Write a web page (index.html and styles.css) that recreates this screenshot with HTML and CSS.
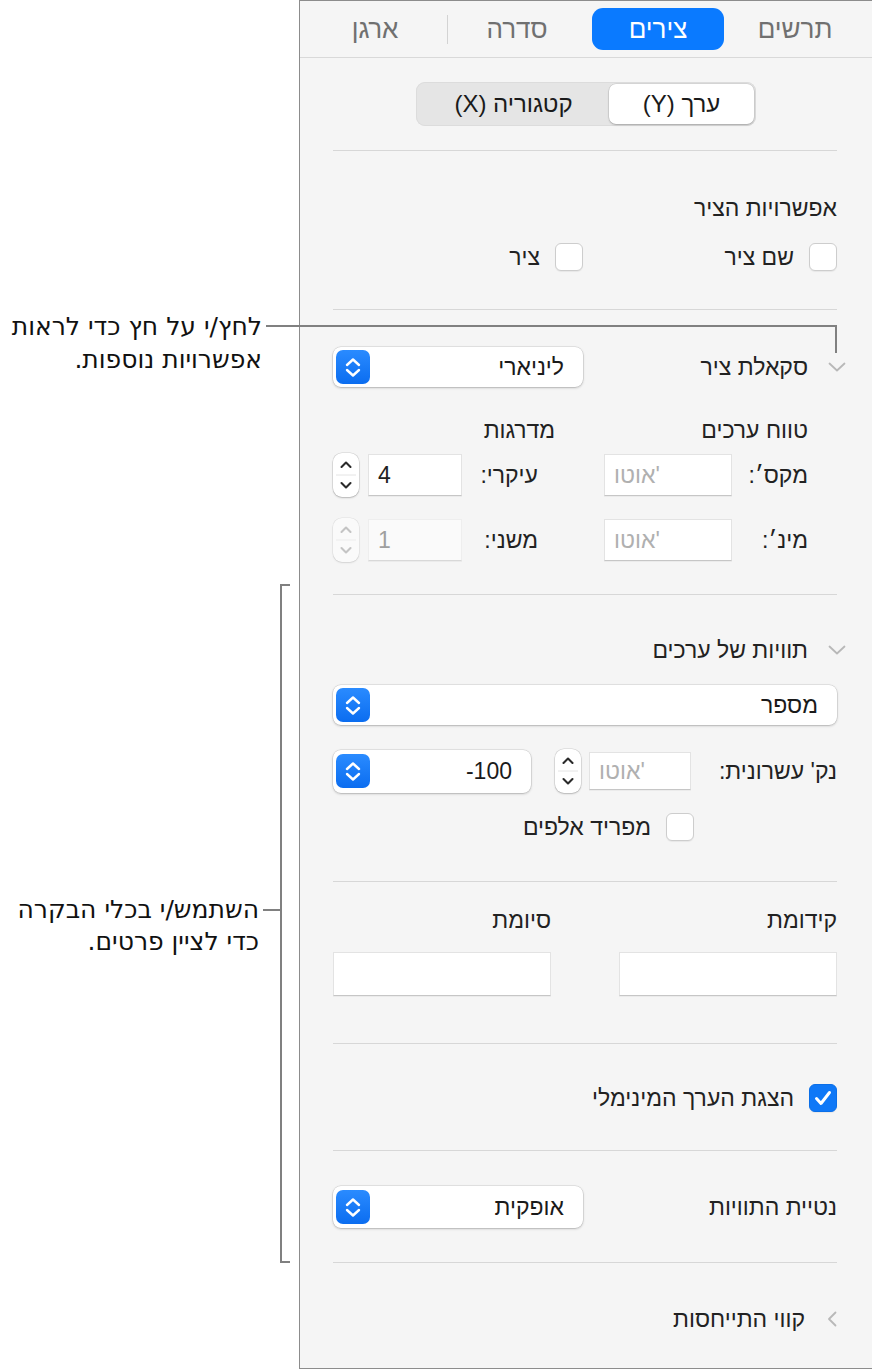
FILE: index.html
```html
<!DOCTYPE html>
<html lang="he">
<head>
<meta charset="utf-8">
<title>Axis inspector</title>
<link rel="stylesheet" href="styles.css">
</head>
<body>
<div class="page">
  <div class="notes" dir="rtl">
    <p class="note note-1">לחץ/י על חץ כדי לראות<br>אפשרויות נוספות.</p>
    <span class="cline l1-h"></span>
    <span class="cline l1-v"></span>
    <p class="note note-2">השתמש/י בכלי הבקרה<br>כדי לציין פרטים.</p>
    <span class="cline l2-tick"></span>
    <span class="bracket"></span>
  </div>

  <div class="panel" dir="rtl">
    <nav class="tabs">
      <span class="tab t1">תרשים</span>
      <span class="tab t2 active">צירים</span>
      <span class="tab t3">סדרה</span>
      <span class="tab-sep"></span>
      <span class="tab t4">ארגן</span>
    </nav>

    <div class="seg-wrap">
      <div class="seg">
        <span class="seg-item on">ערך (Y)</span>
        <span class="seg-item">קטגוריה (X)</span>
      </div>
    </div>

    <div class="content">
      <hr class="div">

      <section class="sec sec-a">
        <div class="title">אפשרויות הציר</div>
        <div class="two-col checks">
          <label class="check"><span class="box"></span><span>שם ציר</span></label>
          <label class="check"><span class="box"></span><span>ציר</span></label>
        </div>
      </section>

      <hr class="div">

      <section class="sec sec-b">
        <div class="row-hdr h40">
          <div class="hdr">
            <svg class="chev-down" width="18" height="10" viewBox="0 0 18 10"><polyline points="1.5,1.5 9,8.5 16.5,1.5" fill="none" stroke="#b8b8b8" stroke-width="1.8" stroke-linecap="round" stroke-linejoin="round"/></svg>
            <span class="hdr-text">סקאלת ציר</span>
          </div>
          <div class="popup w250">
            <span class="popup-val">ליניארי</span>
            <span class="popup-ic"><svg width="34" height="34" viewBox="0 0 34 34"><polyline points="11,15 17,9.5 23,15" fill="none" stroke="#fff" stroke-width="2.4" stroke-linecap="round" stroke-linejoin="round"/><polyline points="11,20 17,25.5 23,20" fill="none" stroke="#fff" stroke-width="2.4" stroke-linecap="round" stroke-linejoin="round"/></svg></span>
          </div>
        </div>

        <div class="range-grid">
          <div class="g-head gh1">טווח ערכים</div>
          <div class="g-head gh2">מדרגות</div>

          <div class="g-label gl1 r1">מקס׳:</div>
          <div class="field r1" dir="ltr"><span class="ph">אוטו'</span></div>
          <div class="g-label gl2 r1">עיקרי:</div>
          <div class="field r1" dir="ltr">4</div>
          <div class="g-gap r1"></div>
          <div class="stepper r1">
            <svg width="26" height="44" viewBox="0 0 26 44"><line x1="3" y1="22" x2="23" y2="22" stroke="#e4e4e4" stroke-width="1"/><polyline points="8.5,14 13,9.5 17.5,14" fill="none" stroke="#2a2a2a" stroke-width="2.1" stroke-linecap="round" stroke-linejoin="round"/><polyline points="8.5,30 13,34.5 17.5,30" fill="none" stroke="#2a2a2a" stroke-width="2.1" stroke-linecap="round" stroke-linejoin="round"/></svg>
          </div>

          <div class="g-label gl1 r2">מינ׳:</div>
          <div class="field r2" dir="ltr"><span class="ph">אוטו'</span></div>
          <div class="g-label gl2 r2">משני:</div>
          <div class="field disabled r2" dir="ltr">1</div>
          <div class="g-gap r2"></div>
          <div class="stepper disabled r2">
            <svg width="26" height="44" viewBox="0 0 26 44"><line x1="3" y1="22" x2="23" y2="22" stroke="#ececec" stroke-width="1"/><polyline points="8.5,14 13,9.5 17.5,14" fill="none" stroke="#c4c4c4" stroke-width="2.1" stroke-linecap="round" stroke-linejoin="round"/><polyline points="8.5,30 13,34.5 17.5,30" fill="none" stroke="#c4c4c4" stroke-width="2.1" stroke-linecap="round" stroke-linejoin="round"/></svg>
          </div>
        </div>
      </section>

      <hr class="div">

      <section class="sec sec-c">
        <div class="row-hdr h22">
          <div class="hdr">
            <svg class="chev-down" width="18" height="10" viewBox="0 0 18 10"><polyline points="1.5,1.5 9,8.5 16.5,1.5" fill="none" stroke="#b8b8b8" stroke-width="1.8" stroke-linecap="round" stroke-linejoin="round"/></svg>
            <span class="hdr-text">תוויות של ערכים</span>
          </div>
        </div>

        <div class="popup wfull">
          <span class="popup-val">מספר</span>
          <span class="popup-ic"><svg width="34" height="34" viewBox="0 0 34 34"><polyline points="11,15 17,9.5 23,15" fill="none" stroke="#fff" stroke-width="2.4" stroke-linecap="round" stroke-linejoin="round"/><polyline points="11,20 17,25.5 23,20" fill="none" stroke="#fff" stroke-width="2.4" stroke-linecap="round" stroke-linejoin="round"/></svg></span>
        </div>

        <div class="dec-grid">
          <div class="dec-label">נק' עשרונית:</div>
          <div class="field f38" dir="ltr"><span class="ph">אוטו'</span></div>
          <div></div>
          <div class="stepper">
            <svg width="26" height="44" viewBox="0 0 26 44"><line x1="3" y1="22" x2="23" y2="22" stroke="#e4e4e4" stroke-width="1"/><polyline points="8.5,14 13,9.5 17.5,14" fill="none" stroke="#2a2a2a" stroke-width="2.1" stroke-linecap="round" stroke-linejoin="round"/><polyline points="8.5,30 13,34.5 17.5,30" fill="none" stroke="#2a2a2a" stroke-width="2.1" stroke-linecap="round" stroke-linejoin="round"/></svg>
          </div>
          <div></div>
          <div class="popup h43">
            <span class="popup-val"><span dir="ltr">-100</span></span>
            <span class="popup-ic"><svg width="34" height="34" viewBox="0 0 34 34"><polyline points="11,15 17,9.5 23,15" fill="none" stroke="#fff" stroke-width="2.4" stroke-linecap="round" stroke-linejoin="round"/><polyline points="11,20 17,25.5 23,20" fill="none" stroke="#fff" stroke-width="2.4" stroke-linecap="round" stroke-linejoin="round"/></svg></span>
          </div>
        </div>

        <div class="thousands">
          <label class="check"><span class="box"></span><span>מפריד אלפים</span></label>
        </div>
      </section>

      <hr class="div">

      <section class="sec sec-d">
        <div class="fix-grid">
          <div class="title">קידומת</div>
          <div class="title">סיומת</div>
          <div class="field tall"></div>
          <div class="field tall"></div>
        </div>
      </section>

      <hr class="div">

      <section class="sec sec-e">
        <label class="check"><span class="box checked"><svg width="28" height="28" viewBox="0 0 28 28"><polyline points="7.5,14.5 12,19.5 20.5,8.5" fill="none" stroke="#fff" stroke-width="3" stroke-linecap="round" stroke-linejoin="round"/></svg></span><span>הצגת הערך המינימלי</span></label>
      </section>

      <hr class="div">

      <section class="sec sec-f">
        <div class="row-hdr h42">
          <span class="plain">נטיית התוויות</span>
          <div class="popup w250 h42">
            <span class="popup-val">אופקית</span>
            <span class="popup-ic"><svg width="34" height="34" viewBox="0 0 34 34"><polyline points="11,15 17,9.5 23,15" fill="none" stroke="#fff" stroke-width="2.4" stroke-linecap="round" stroke-linejoin="round"/><polyline points="11,20 17,25.5 23,20" fill="none" stroke="#fff" stroke-width="2.4" stroke-linecap="round" stroke-linejoin="round"/></svg></span>
          </div>
        </div>
      </section>

      <hr class="div">

      <section class="sec sec-g">
        <div class="row-hdr h22">
          <div class="hdr">
            <svg class="chev-left" width="12" height="16" viewBox="0 0 12 16"><polyline points="9.5,1.5 3,8 9.5,14.5" fill="none" stroke="#b8b8b8" stroke-width="1.8" stroke-linecap="round" stroke-linejoin="round"/></svg>
            <span class="hdr-text g-text">קווי התייחסות</span>
          </div>
        </div>
      </section>
    </div>
  </div>
</div>
</body>
</html>
```

FILE: styles.css
```css
* { box-sizing: border-box; }

html, body {
  margin: 0;
  padding: 0;
  background: #ffffff;
}

body {
  font-family: "Liberation Sans", "DejaVu Sans", sans-serif;
  color: #222;
}

.page {
  position: relative;
  width: 872px;
  height: 1370px;
  overflow: hidden;
}

/* ---------- callouts ---------- */
.notes {
  position: absolute;
  inset: 0;
  z-index: 2;
  pointer-events: none;
}

.note {
  position: absolute;
  margin: 0;
  font-family: "DejaVu Sans", "Liberation Sans", sans-serif;
  font-size: 25px;
  color: #111;
  text-align: right;
  white-space: nowrap;
}

.note-1 {
  right: 610px;
  top: 310px;
  line-height: 33px;
}

.note-2 {
  right: 613px;
  top: 894px;
  line-height: 32px;
}

.cline {
  position: absolute;
  background: #808080;
}

.l1-h { left: 266px; top: 325px; width: 571px; height: 2px; }
.l1-v { left: 835px; top: 325px; width: 2px; height: 28px; }
.l2-tick { left: 263px; top: 909px; width: 18px; height: 2px; }

.bracket {
  position: absolute;
  left: 280px;
  top: 584px;
  width: 10px;
  height: 679px;
  border: 2px solid #808080;
  border-right: none;
}

/* ---------- panel ---------- */
.panel {
  margin-left: 299px;
  width: 573px;
  height: 1369px;
  background: #f5f5f5;
  border-left: 1px solid #8c8c8c;
  border-top: 1px solid #8c8c8c;
  border-bottom: 1px solid #8c8c8c;
  overflow: hidden;
  font-size: 23px;
  color: #222;
}

.tabs {
  display: flex;
  align-items: flex-start;
  height: 57px;
  padding-top: 7px;
  padding-right: 11px;
  border-bottom: 1px solid #d9d9d9;
}

.tab {
  width: 132px;
  height: 42px;
  display: flex;
  align-items: center;
  justify-content: center;
  font-size: 26px;
  color: #707070;
  border-radius: 11px;
}

.tab.active {
  background: #0a7aff;
  color: #fff;
}

.t2 { margin-right: 5px; }
.t3 { margin-right: 9px; }
.tab-sep {
  width: 1px;
  height: 29px;
  margin-top: 7px;
  margin-right: 3px;
  background: #d3d3d3;
}
.t4 { margin-right: 6px; }

.seg-wrap {
  display: flex;
  justify-content: center;
  padding: 24px 0;
}

.seg {
  display: flex;
  width: 340px;
  height: 44px;
  padding: 2px;
  background: #e5e5e5;
  border-radius: 9px;
  box-shadow: inset 0 0 0 1px #dcdcdc;
}

.seg-item {
  flex: 1;
  display: flex;
  align-items: center;
  justify-content: center;
  font-size: 24px;
  color: #1a1a1a;
  border-radius: 7px;
}

.seg-item.on {
  flex: 0 0 145px;
  background: #fff;
  box-shadow: 0 0 0 0.5px rgba(0,0,0,0.12), 0 1px 2px rgba(0,0,0,0.22);
}

.content {
  padding: 0 35px 0 33px;
}

.div {
  margin: 0;
  border: 0;
  height: 1px;
  background: #d7d7d7;
}

.title {
  line-height: 22px;
  height: 22px;
}

/* checkboxes */
.check {
  display: flex;
  align-items: center;
  gap: 15px;
  height: 28px;
}

.box {
  width: 28px;
  height: 28px;
  flex: 0 0 28px;
  background: #fff;
  border-radius: 6px;
  border: 1px solid #cdcdcd;
  box-shadow: 0 1px 1px rgba(0,0,0,0.06);
}

.box.checked {
  background: #0f78f7;
  border-color: #0b6fe8;
}

.box.checked svg { display: block; margin: -1px; }

.two-col {
  display: grid;
  grid-template-columns: 254px 1fr;
}

/* section A */
.sec-a { padding: 46px 0 38px; }
.sec-a .checks { margin-top: 24px; }

/* header rows */
.row-hdr {
  display: flex;
  align-items: center;
  justify-content: space-between;
}
.h40 { height: 40px; }
.h22 { height: 22px; }
.h42 { height: 42px; }

.hdr {
  display: flex;
  align-items: center;
}

.chev-down { margin-right: -9px; flex: 0 0 18px; }
.chev-left { margin-right: -1px; flex: 0 0 12px; }

.hdr-text { margin-right: 20px; }
.g-text { margin-right: 21px; }

/* popup buttons */
.popup {
  display: flex;
  align-items: center;
  justify-content: space-between;
  height: 40px;
  background: #fff;
  border-radius: 8px;
  box-shadow: 0 0 0 0.5px rgba(0,0,0,0.14), 0 1px 2.5px rgba(0,0,0,0.22);
  padding: 0 19px 0 3px;
}

.popup.h42 { height: 42px; }
.popup.h43 { height: 43px; }
.w250 { width: 250px; }
.wfull { width: 100%; }

.popup-val { color: #1a1a1a; }

.popup-ic {
  width: 34px;
  height: 34px;
  border-radius: 7px;
  background: linear-gradient(#2a8bff, #0b6df0);
  display: flex;
}

/* section B */
.sec-b { padding: 37px 0 32px; }

.range-grid {
  display: grid;
  grid-template-columns: 105px 128px 142px 94px 9px 26px;
  grid-template-rows: 22px 12px 44px 21px 44px;
  margin-top: 32px;
  align-items: center;
}

.gh1 { grid-row: 1; grid-column: 1 / span 2; padding-right: 29px; line-height: 22px; }
.gh2 { grid-row: 1; grid-column: 3 / span 4; padding-right: 49px; line-height: 22px; }
.r1 { grid-row: 3; }
.r2 { grid-row: 5; }

.gl1 { padding-right: 29px; }
.gl2 { padding-right: 66px; }

/* text fields */
.field {
  height: 42px;
  background: #fff;
  border: 1px solid #e3e3e3;
  border-bottom: 1px solid #c6c6c6;
  box-shadow: 0 1px 0 rgba(0,0,0,0.04);
  display: flex;
  align-items: center;
  padding-left: 9px;
  font-size: 23px;
  color: #222;
  text-align: left;
}

.field .ph { color: #b0b0b0; }

.field.disabled {
  background: #fafafa;
  border-color: #eeeeee;
  border-bottom-color: #d8d8d8;
  color: #9f9f9f;
}

.field.f38 { height: 38px; }
.field.tall { height: 44px; }

/* steppers */
.stepper {
  width: 26px;
  height: 44px;
  background: #fff;
  border-radius: 9px;
  box-shadow: 0 0 0 0.5px rgba(0,0,0,0.14), 0 1px 2px rgba(0,0,0,0.2);
}

.stepper svg { display: block; }

.stepper.disabled {
  background: #fafafa;
  box-shadow: 0 0 0 0.5px rgba(0,0,0,0.08), 0 1px 2px rgba(0,0,0,0.1);
}

/* section C */
.sec-c { padding: 44px 0 40px; }
.sec-c .popup.wfull { margin-top: 24px; }

.dec-grid {
  display: grid;
  grid-template-columns: 1fr 102px 8px 26px 24px 198px;
  align-items: center;
  height: 44px;
  margin-top: 24px;
  white-space: nowrap;
}

.thousands {
  margin-top: 20px;
  padding-right: 143px;
}

/* section D */
.sec-d { padding: 27px 0 47px; }

.fix-grid {
  display: grid;
  grid-template-columns: 218px 218px;
  column-gap: 68px;
  grid-template-rows: 22px 44px;
  row-gap: 21px;
}

/* section E */
.sec-e { padding: 40px 0 38px; }

/* section F */
.sec-f { padding: 35px 0 34px; }

/* section G */
.sec-g { padding-top: 45px; }
```
